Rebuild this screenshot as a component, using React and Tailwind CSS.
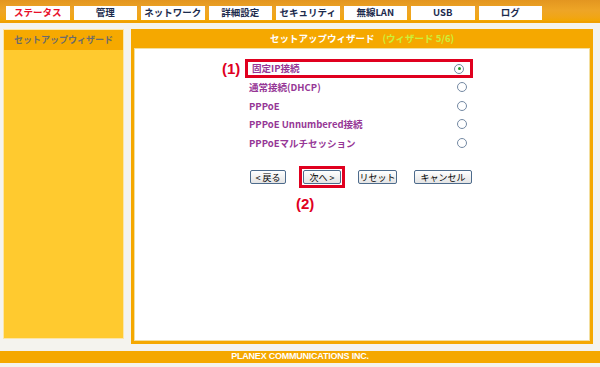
import React from 'react';

const tabs = ['ステータス', '管理', 'ネットワーク', '詳細設定', 'セキュリティ', '無線LAN', 'USB', 'ログ'];

const options = ['固定IP接続', '通常接続(DHCP)', 'PPPoE', 'PPPoE Unnumbered接続', 'PPPoEマルチセッション'];

const jp = { fontFamily: '"Noto Sans CJK JP", "Liberation Sans", sans-serif' };
const mark = { fontFamily: '"Liberation Sans", Arial, sans-serif' };

const Radio = ({ checked }) => (
    <span className="w-[10px] h-[10px] rounded-full border-[1.5px] border-[#7489a3] bg-white flex items-center justify-center">
        {checked && <span className="w-[3px] h-[3px] rounded-full bg-[#1f9a2a]" />}
    </span>
);

const Btn = ({ children, w }) => (
    <button
        className={`${w} h-[14px] border border-[#4d6b8c] rounded-[2px] bg-gradient-to-b from-white to-[#e4e4e4] text-[9px] leading-none text-black flex items-center justify-center`}
        style={jp}
    >
        {children}
    </button>
);

const App = () => {
    return (
        <div className="w-[600px] h-[367px] bg-[#f4f3ee] flex flex-col overflow-hidden">
            {/* Top tab band */}
            <div className="h-[23px] bg-gradient-to-b from-[#e39620] via-[#eea526] to-[#f3a600] border-b-[2px] border-[#f0a000] flex gap-[4px] pl-[6px] pt-[6px]">
                {tabs.map((t, i) => (
                    <div
                        key={t}
                        className={`w-[63.5px] h-[14px] bg-white flex items-center justify-center text-[9.5px] font-bold leading-none ${i === 0 ? 'text-[#e8102a]' : 'text-[#1c2b4d]'}`}
                        style={jp}
                    >
                        {t}
                    </div>
                ))}
            </div>

            {/* Body */}
            <div className="flex pt-[6px] pl-[3px]">
                {/* Sidebar */}
                <div className="w-[121px] h-[310px] bg-[#ffca2f] border border-[#fbe6a8] flex flex-col">
                    <div className="h-[20px] bg-[#f6a900] flex items-center justify-center text-[9px] font-bold text-[#6b6b6b]" style={jp}>
                        セットアップウィザード
                    </div>
                </div>

                {/* Main panel */}
                <div className="ml-[7px] w-[462px] h-[315px] bg-[#f5a800] p-[3px] pt-0 flex flex-col">
                    <div className="h-[19px] flex items-center justify-center gap-[8px] text-[9.5px] font-bold" style={jp}>
                        <span className="text-white">セットアップウィザード</span>
                        <span className="text-[#ccf03a]">(ウィザード 5/6)</span>
                    </div>
                    <div className="flex-1 bg-white border border-[#f3dfa0] flex flex-col pt-[10px] pl-[87px]">
                        {/* Options */}
                        <div className="flex items-start">
                            <span className="w-[23px] text-[15px] font-bold text-[#e0001f] leading-none mt-[2px]" style={mark}>(1)</span>
                            <div className="flex flex-col w-[228px]">
                                {options.map((o, i) => (
                                    <div
                                        key={o}
                                        className={`flex items-center justify-between pl-[4px] pr-[6px] text-[9.5px] font-bold text-[#963796] ${i === 0 ? 'h-[19px] border-[3px] border-[#e0001f] pl-[1px] pr-[3px]' : 'h-[18.5px]'}`}
                                        style={jp}
                                    >
                                        <span>{o}</span>
                                        <Radio checked={i === 0} />
                                    </div>
                                ))}
                            </div>
                        </div>

                        {/* Buttons */}
                        <div className="flex items-start ml-[28px] mt-[14px]">
                            <div className="mt-[4px]"><Btn w="w-[36px]">&lt; 戻る</Btn></div>
                            <div className="ml-[13px] flex flex-col items-start">
                                <div className="w-[46px] h-[22px] border-[3px] border-[#e0001f] flex items-center justify-center">
                                    <Btn w="w-[38px]">次へ &gt;</Btn>
                                </div>
                                <span className="mt-[8px] -ml-[3px] text-[15px] font-bold text-[#e0001f] leading-none" style={mark}>(2)</span>
                            </div>
                            <div className="ml-[13px] mt-[4px]"><Btn w="w-[39px]">リセット</Btn></div>
                            <div className="ml-[17px] mt-[4px]"><Btn w="w-[58px]">キャンセル</Btn></div>
                        </div>
                    </div>
                </div>
            </div>

            {/* Footer */}
            <div className="mt-[7px] h-[12px] bg-[#f5a800] flex items-center justify-center text-[9px] font-bold text-white tracking-tight" style={mark}>
                PLANEX COMMUNICATIONS INC.
            </div>
        </div>
    );
};

export default App;
